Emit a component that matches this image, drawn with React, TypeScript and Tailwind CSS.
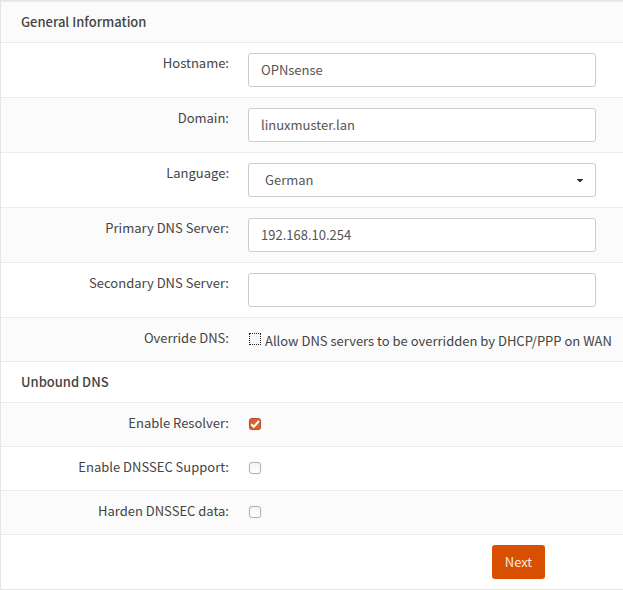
import { useState } from "react";
import type { ReactNode } from "react";

const fieldClass =
  "block h-[34px] w-full max-w-[348px] rounded-[3px] border border-[#cccccc] bg-white text-[13px] leading-5 text-[#555555] outline-none";

function Heading({ children }: { children: ReactNode }) {
  return (
    <h2 className="border-t border-[#ebebeb] px-5 py-[10px] font-['Noto_Sans_CJK_SC_Medium','Noto_Sans_CJK_SC',sans-serif] text-[13px] leading-5 font-medium odd:bg-[#fbfbfb]">
      {children}
    </h2>
  );
}

function Row({ id, label, children }: { id: string; label: string; children: ReactNode }) {
  return (
    <div className="grid grid-cols-[228px_minmax(0,1fr)] gap-[19px] border-t border-[#ebebeb] py-[10px] pr-[10px] odd:bg-[#fbfbfb]">
      <label htmlFor={id} className="self-start text-right">
        {label}
      </label>
      {children}
    </div>
  );
}

function TextRow({ id, label, value }: { id: string; label: string; value: string }) {
  return (
    <Row id={id} label={label}>
      <input id={id} type="text" defaultValue={value} className={`${fieldClass} px-3 pb-[2px]`} />
    </Row>
  );
}

function CheckBox({ id, initial = false, dotted = false }: { id: string; initial?: boolean; dotted?: boolean }) {
  const [checked, setChecked] = useState(initial);
  return (
    <span className="relative mx-px mt-[5px] block size-3 shrink-0">
      <input
        id={id}
        type="checkbox"
        checked={checked}
        onChange={(e) => setChecked(e.target.checked)}
        className={
          dotted
            ? "block size-3 appearance-none border border-dotted border-[#222222] bg-[#f8f8f8]"
            : "block size-3 appearance-none rounded-[3px] border border-[#b4b4b4] bg-linear-to-b from-[#f4f4f4] to-white shadow-[0_0_1px_#bbbbbb] checked:border-[#b5532b] checked:bg-none checked:bg-[#d9602f]"
        }
      />
      {checked && (
        <svg viewBox="0 0 12 12" className="pointer-events-none absolute inset-0 size-3" aria-hidden="true">
          <path d="M2.2 6.2 4.8 8.8 10 3" fill="none" stroke="#ffffff" strokeWidth="2" />
        </svg>
      )}
    </span>
  );
}

function CheckRow({ id, label, initial }: { id: string; label: string; initial?: boolean }) {
  return (
    <Row id={id} label={label}>
      <div className="h-[23px]">
        <CheckBox id={id} initial={initial} />
      </div>
    </Row>
  );
}

export default function App() {
  return (
    <div className="border-t border-[#e5e5e5] bg-white font-['Noto_Sans_CJK_SC',sans-serif] text-[13px] leading-5 text-[#444444]">
      <form className="border-b border-l border-[#e5e5e5]" onSubmit={(e) => e.preventDefault()}>
        <Heading>General Information</Heading>
        <TextRow id="hostname" label="Hostname:" value="OPNsense" />
        <TextRow id="domain" label="Domain:" value="linuxmuster.lan" />
        <Row id="language" label="Language:">
          <div className="relative w-full max-w-[348px]">
            <select id="language" defaultValue="German" className={`${fieldClass} appearance-none px-4`}>
              <option>English</option>
              <option>German</option>
            </select>
            <svg
              viewBox="0 0 6 3"
              className="pointer-events-none absolute top-4 right-[13px] h-[3px] w-[6px]"
              aria-hidden="true"
            >
              <path d="M0 0h6v1H5v1H4v1H2V2H1V1H0z" fill="#333333" />
            </svg>
          </div>
        </Row>
        <TextRow id="dns1" label="Primary DNS Server:" value="192.168.10.254" />
        <TextRow id="dns2" label="Secondary DNS Server:" value="" />
        <Row id="override" label="Override DNS:">
          <div className="flex h-[23px] gap-[3px]">
            <CheckBox id="override" dotted />
            <label htmlFor="override" className="pt-[3px] whitespace-nowrap">
              Allow DNS servers to be overridden by DHCP/PPP on WAN
            </label>
          </div>
        </Row>
        <Heading>Unbound DNS</Heading>
        <CheckRow id="resolver" label="Enable Resolver:" initial />
        <CheckRow id="dnssec" label="Enable DNSSEC Support:" />
        <CheckRow id="harden" label="Harden DNSSEC data:" />
        <div className="flex justify-end border-t border-[#ebebeb] py-[10px] pr-[78px]">
          <button type="submit" className="h-[34px] w-[53px] rounded-[3px] bg-[#d94f00] text-[#f8e8e0]">
            Next
          </button>
        </div>
      </form>
    </div>
  );
}
